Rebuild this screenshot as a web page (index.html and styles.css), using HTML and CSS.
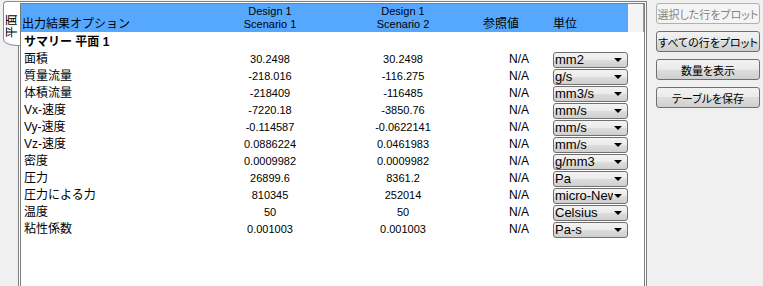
FILE: index.html
```html
<!DOCTYPE html>
<html lang="ja">
<head>
  <meta charset="UTF-8">
  <title>出力結果</title>
  <link rel="stylesheet" href="styles.css">
</head>
<body>

  <div class="window">

    <!-- Side tab -->
    <div class="tabs">
      <div class="tab"><span>平面</span></div>
    </div>

    <!-- Results table -->
    <div class="frame">
      <div class="grid head">
        <div class="label">出力結果オプション</div>
        <div class="num">Design 1<br>Scenario 1</div>
        <div class="num">Design 1<br>Scenario 2</div>
        <div class="ref">参照値</div>
        <div class="unit">単位</div>
        <div class="gutter"></div>
      </div>

      <div class="grid row summary">
        <div class="label"><strong>サマリー 平面 1</strong></div>
      </div>

      <div class="grid row">
        <div class="label">面積</div><div class="num">30.2498</div><div class="num">30.2498</div>
        <div class="ref">N/A</div><div class="combo"><span>mm2</span></div>
      </div>
      <div class="grid row">
        <div class="label">質量流量</div><div class="num">-218.016</div><div class="num">-116.275</div>
        <div class="ref">N/A</div><div class="combo"><span>g/s</span></div>
      </div>
      <div class="grid row">
        <div class="label">体積流量</div><div class="num">-218409</div><div class="num">-116485</div>
        <div class="ref">N/A</div><div class="combo"><span>mm3/s</span></div>
      </div>
      <div class="grid row">
        <div class="label">Vx-速度</div><div class="num">-7220.18</div><div class="num">-3850.76</div>
        <div class="ref">N/A</div><div class="combo"><span>mm/s</span></div>
      </div>
      <div class="grid row">
        <div class="label">Vy-速度</div><div class="num">-0.114587</div><div class="num">-0.0622141</div>
        <div class="ref">N/A</div><div class="combo"><span>mm/s</span></div>
      </div>
      <div class="grid row">
        <div class="label">Vz-速度</div><div class="num">0.0886224</div><div class="num">0.0461983</div>
        <div class="ref">N/A</div><div class="combo"><span>mm/s</span></div>
      </div>
      <div class="grid row">
        <div class="label">密度</div><div class="num">0.0009982</div><div class="num">0.0009982</div>
        <div class="ref">N/A</div><div class="combo"><span>g/mm3</span></div>
      </div>
      <div class="grid row">
        <div class="label">圧力</div><div class="num">26899.6</div><div class="num">8361.2</div>
        <div class="ref">N/A</div><div class="combo"><span>Pa</span></div>
      </div>
      <div class="grid row">
        <div class="label">圧力による力</div><div class="num">810345</div><div class="num">252014</div>
        <div class="ref">N/A</div><div class="combo"><span>micro-Newton</span></div>
      </div>
      <div class="grid row">
        <div class="label">温度</div><div class="num">50</div><div class="num">50</div>
        <div class="ref">N/A</div><div class="combo"><span>Celsius</span></div>
      </div>
      <div class="grid row">
        <div class="label">粘性係数</div><div class="num">0.001003</div><div class="num">0.001003</div>
        <div class="ref">N/A</div><div class="combo"><span>Pa-s</span></div>
      </div>
    </div>

    <!-- Actions -->
    <div class="actions">
      <button disabled>選択した行をプロット</button>
      <button>すべての行をプロット</button>
      <button>数量を表示</button>
      <button>テーブルを保存</button>
    </div>

  </div>

</body>
</html>
```

FILE: styles.css
```css
body {
  margin: 0;
  background: #f0f0f0;
  font-family: "Liberation Sans", "Noto Sans CJK JP", sans-serif;
  font-size: 11px;
  color: #000000;
}

.window {
  display: flex;
  height: 286px;
  overflow: hidden;
}

/* left tab */
.tabs {
  width: 18px;
  padding-top: 1px;
}

.tab {
  position: relative;
  z-index: 1;
  box-sizing: border-box;
  width: 17px;
  height: 45px;
  margin-left: 3px;
  margin-right: -2px;
  background: #ffffff;
  border: 1px solid #898c95;
  border-right: none;
  border-radius: 4px 0 0 14px / 4px 0 0 7px;
  display: flex;
  justify-content: center;
  padding-top: 12px;
}

.tab span {
  writing-mode: vertical-rl;
  text-orientation: sideways;
  transform: rotate(180deg);
  font-size: 12px;
  line-height: 13px;
  height: 24px;
}

/* table frame */
.frame {
  box-sizing: border-box;
  width: 629px;
  margin-top: 1px;
  border: 3px double #7d7d7d;
  border-bottom: none;
  background: #ffffff;
}

.grid {
  display: grid;
  grid-template-columns: 189px 120px 146px 77px 75px 15px;
}

.head {
  height: 28px;
  background: #56a8ff;
  align-items: end;
  line-height: 13px;
}

.head .label {
  padding-left: 1px;
  font-size: 12px;
  padding-bottom: 1px;
}

.head .num {
  padding-bottom: 1px;
}

.head .ref {
  text-align: left;
  padding: 0 0 1px 7px;
  font-size: 12px;
}

.head .unit {
  font-size: 12px;
  padding-bottom: 1px;
}

.head .gutter {
  align-self: stretch;
  background: #f4f4f4;
}

.row {
  height: 17px;
  line-height: 17px;
  align-items: center;
}

.summary {
  margin-top: 2px;
}

.label {
  padding-left: 3px;
  font-size: 12px;
  white-space: nowrap;
}

.num {
  text-align: center;
}

.ref {
  text-align: right;
  padding-right: 24px;
  font-size: 12px;
}

/* unit dropdown */
.combo {
  position: relative;
  box-sizing: border-box;
  height: 16px;
  border: 1px solid #707070;
  border-radius: 3px;
  background: linear-gradient(#f3f3f3, #ebebeb 50%, #dddddd 50%, #cfcfcf);
  font-size: 13px;
  line-height: 14px;
}

.combo span {
  display: block;
  width: 58px;
  overflow: hidden;
  white-space: nowrap;
  padding-left: 1px;
}

.combo::after {
  content: "";
  position: absolute;
  right: 5px;
  top: 5px;
  border-left: 4px solid transparent;
  border-right: 4px solid transparent;
  border-top: 4px solid #000000;
}

/* buttons */
.actions {
  display: flex;
  flex-direction: column;
  gap: 7px;
  padding: 3px 0 0 9px;
}

.actions button {
  box-sizing: border-box;
  width: 104px;
  height: 21px;
  padding: 0;
  font-family: "Noto Sans CJK JP", sans-serif;
  font-size: 11px;
  font-feature-settings: "palt";
  line-height: 18px;
  color: #000000;
  background: linear-gradient(#f2f2f2, #ebebeb 50%, #dddddd 50%, #cfcfcf);
  border: 1px solid #707070;
  border-radius: 3px;
  white-space: nowrap;
}

.actions button:disabled {
  color: #838383;
  background: #f4f4f4;
  border-color: #adb2b5;
}
```
